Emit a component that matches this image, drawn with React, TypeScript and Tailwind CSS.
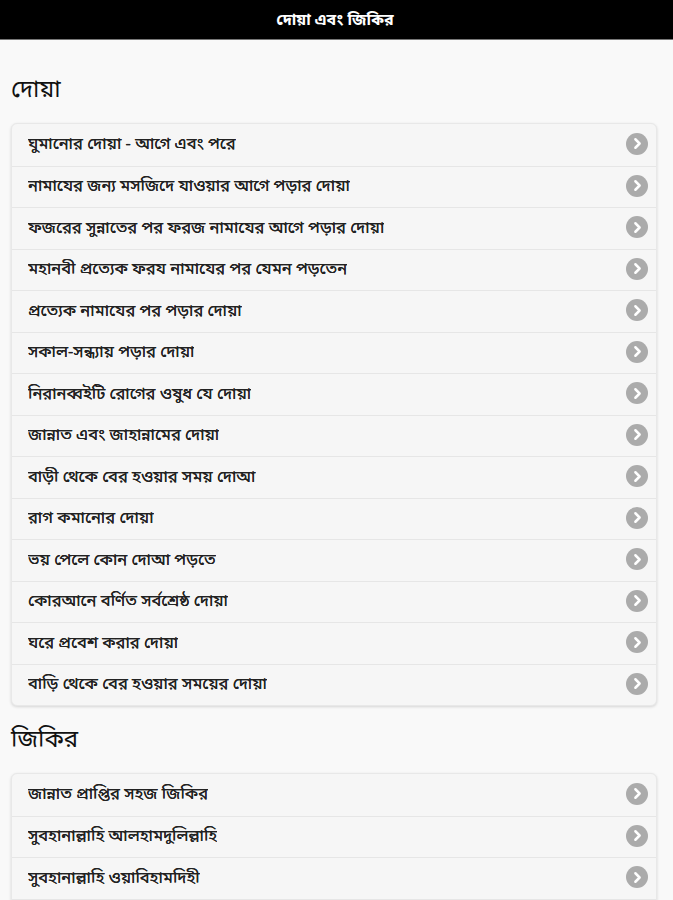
import { ChevronRight } from "lucide-react";

const duas = [
  "ঘুমানোর দোয়া - আগে এবং পরে",
  "নামাযের জন্য মসজিদে যাওয়ার আগে পড়ার দোয়া",
  "ফজরের সুন্নাতের পর ফরজ নামাযের আগে পড়ার দোয়া",
  "মহানবী প্রত্যেক ফরয নামাযের পর যেমন পড়তেন",
  "প্রত্যেক নামাযের পর পড়ার দোয়া",
  "সকাল-সন্ধ্যায় পড়ার দোয়া",
  "নিরানব্বইটি রোগের ওষুধ যে দোয়া",
  "জান্নাত এবং জাহান্নামের দোয়া",
  "বাড়ী থেকে বের হওয়ার সময় দোআ",
  "রাগ কমানোর দোয়া",
  "ভয় পেলে কোন দোআ পড়তে",
  "কোরআনে বর্ণিত সর্বশ্রেষ্ঠ দোয়া",
  "ঘরে প্রবেশ করার দোয়া",
  "বাড়ি থেকে বের হওয়ার সময়ের দোয়া",
];

// last row runs off the bottom of the page, only its top border shows
const zikr = [
  "জান্নাত প্রাপ্তির সহজ জিকির",
  "সুবহানাল্লাহি আলহামদুলিল্লাহি",
  "সুবহানাল্লাহি ওয়াবিহামদিহী",
  "",
];

function ListBlock({ items }: { items: string[] }) {
  return (
    <ul className="ml-[11px] mr-[16px] rounded-md border border-[#e8e8e8] bg-[#f6f6f6] shadow-[0_1px_3px_rgba(0,0,0,0.15)]">
      {items.map((item, i) => (
        <li
          key={item}
          className={`flex h-[41.5px] items-center justify-between pl-[16px] pr-[8px] text-[16.5px] text-[#222] [text-shadow:0_0_0.4px_#222] ${i > 0 ? "border-t border-[#e6e6e6]" : ""}`}
        >
          <span className="truncate pt-[2px]">{item}</span>
          <span className="-mt-[2px] flex h-[22px] w-[22px] shrink-0 items-center justify-center rounded-full bg-[#ababab]">
            <ChevronRight size={17} strokeWidth={3.5} className="text-white" />
          </span>
        </li>
      ))}
    </ul>
  );
}

export default function App() {
  return (
    <div className="h-[900px] overflow-hidden bg-[#f9f9f9] font-['Noto_Sans_Bengali','Noto_Sans','Liberation_Sans',sans-serif]">
      <header className="flex h-[40px] items-center justify-center border-b border-[#777] bg-black pt-[3px] pr-[3px] text-[16px] font-bold text-white">
        দোয়া এবং জিকির
      </header>
      <h2 className="mx-[11px] mt-[34px] mb-[15px] h-[34px] text-[24px] leading-[34px] text-[#111]">দোয়া</h2>
      <ListBlock items={duas} />
      <h2 className="mx-[11px] mt-[18px] mb-[15px] h-[34px] text-[24px] leading-[34px] text-[#111]">জিকির</h2>
      <ListBlock items={zikr} />
    </div>
  );
}
